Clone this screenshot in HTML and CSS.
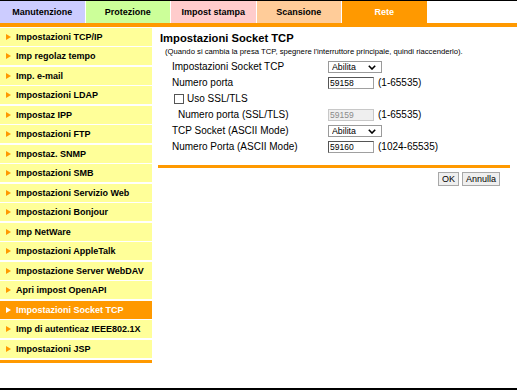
FILE: index.html
```html
<!DOCTYPE html>
<html lang="it">

<head>
    <meta charset="UTF-8">
    <title>Rete - Impostazioni Socket TCP</title>
    <link rel="stylesheet" href="styles.css">
</head>

<body>
    <div class="tabs">
        <div class="tab" id="tab-maint">Manutenzione</div>
        <div class="tab" id="tab-sec">Protezione</div>
        <div class="tab" id="tab-print">Impost stampa</div>
        <div class="tab" id="tab-scan">Scansione</div>
        <div class="tab active" id="tab-net">Rete</div>
    </div>
    <div class="tab-rule"></div>

    <div class="main">
        <div class="sidebar">
            <ul class="menu">
                <li class="menu-item">Impostazioni TCP/IP</li>
                <li class="menu-item">Imp regolaz tempo</li>
                <li class="menu-item">Imp. e-mail</li>
                <li class="menu-item">Impostazioni LDAP</li>
                <li class="menu-item">Impostaz IPP</li>
                <li class="menu-item">Impostazioni FTP</li>
                <li class="menu-item">Impostaz. SNMP</li>
                <li class="menu-item">Impostazioni SMB</li>
                <li class="menu-item">Impostazioni Servizio Web</li>
                <li class="menu-item">Impostazioni Bonjour</li>
                <li class="menu-item">Imp NetWare</li>
                <li class="menu-item">Impostazioni AppleTalk</li>
                <li class="menu-item">Impostazione Server WebDAV</li>
                <li class="menu-item">Apri impost OpenAPI</li>
                <li class="menu-item active">Impostazioni Socket TCP</li>
                <li class="menu-item">Imp di autenticaz IEEE802.1X</li>
                <li class="menu-item">Impostazioni JSP</li>
            </ul>
            <div class="menu-rule"></div>
        </div>

        <div class="content">
            <h1 class="title">Impostazioni Socket TCP</h1>
            <p class="note">(Quando si cambia la presa TCP, spegnere l'interruttore principale, quindi riaccenderlo).</p>

            <form class="settings">
                <div class="row">
                    <label class="label">Impostazioni Socket TCP</label>
                    <div class="select-wrap">
                        <select class="select">
                            <option>Abilita</option>
                            <option>Disabilita</option>
                        </select>
                        <svg class="chevron" width="8" height="5" viewBox="0 0 8 5">
                            <path d="M0.8 0.8 L4 4 L7.2 0.8" fill="none" stroke="#000" stroke-width="1.6"/>
                        </svg>
                    </div>
                </div>
                <div class="row">
                    <label class="label">Numero porta</label>
                    <input class="field" type="text" value="59158">
                    <span class="range">(1-65535)</span>
                </div>
                <div class="row">
                    <label class="check-label"><input class="check" type="checkbox">Uso SSL/TLS</label>
                </div>
                <div class="row">
                    <label class="label sub">Numero porta (SSL/TLS)</label>
                    <input class="field" type="text" value="59159" disabled>
                    <span class="range">(1-65535)</span>
                </div>
                <div class="row">
                    <label class="label">TCP Socket (ASCII Mode)</label>
                    <div class="select-wrap">
                        <select class="select">
                            <option>Abilita</option>
                            <option>Disabilita</option>
                        </select>
                        <svg class="chevron" width="8" height="5" viewBox="0 0 8 5">
                            <path d="M0.8 0.8 L4 4 L7.2 0.8" fill="none" stroke="#000" stroke-width="1.6"/>
                        </svg>
                    </div>
                </div>
                <div class="row">
                    <label class="label">Numero Porta (ASCII Mode)</label>
                    <input class="field" type="text" value="59160">
                    <span class="range">(1024-65535)</span>
                </div>

                <div class="content-rule"></div>

                <div class="buttons">
                    <button type="submit" class="btn">OK</button>
                    <button type="button" class="btn">Annulla</button>
                </div>
            </form>
        </div>
    </div>
    <div class="bottom-rule"></div>
</body>

</html>
```

FILE: styles.css
```css
body {
    margin: 0;
    padding: 0;
    background-color: #ffffff;
    color: #000000;
    font-family: "Liberation Sans", Arial, sans-serif;
}

/* top tabs */

.tabs {
    display: flex;
    flex-direction: row;
    gap: 1px;
    height: 22px;
    border-top: 1px solid #000000;
}

.tab {
    width: 84.5px;
    display: flex;
    align-items: center;
    justify-content: center;
    font-size: 9px;
    font-weight: bold;
    color: #000000;
}

#tab-maint {
    background-color: #ccccff;
}

#tab-sec {
    background-color: #ccff99;
}

#tab-print {
    background-color: #ffcccc;
}

#tab-scan {
    background-color: #ffcc99;
}

#tab-net {
    background-color: #ff9900;
    color: #ffffff;
}

.tab-rule {
    height: 4px;
    background-color: #ff9900;
}

/* main */

.main {
    display: flex;
    flex-direction: row;
    height: 361px;
}

.sidebar {
    width: 152px;
    padding-top: 0.5px;
}

.menu {
    list-style: none;
    margin: 0;
    padding: 0;
    display: flex;
    flex-direction: column;
    gap: 1.5px;
}

.menu-item {
    height: 18px;
    display: flex;
    align-items: center;
    padding-left: 6px;
    background-color: #ffff99;
    font-size: 9px;
    font-weight: bold;
}

.menu-item::before {
    content: "";
    width: 0;
    height: 0;
    margin-right: 5px;
    border-left: 5px solid #ff9900;
    border-top: 3.5px solid transparent;
    border-bottom: 3.5px solid transparent;
}

.menu-item.active {
    background-color: #ff9900;
    color: #ffffff;
}

.menu-item.active::before {
    border-left-color: #ffffff;
}

.menu-rule {
    height: 3px;
    margin-top: 2.5px;
    background-color: #ff9900;
}

.content {
    flex: 1;
    margin: 0 7px 0 6px;
    padding-top: 4px;
}

.title {
    margin: 0 0 2px 2px;
    font-size: 11.2px;
    line-height: 14px;
    font-weight: bold;
}

.note {
    margin: 0 0 1.5px 7px;
    font-size: 7.7px;
    line-height: 10px;
}

.settings {
    margin: 0;
}

.row {
    height: 16px;
    display: flex;
    align-items: center;
    padding-left: 14px;
    font-size: 10px;
}

.label {
    width: 156px;
}

.label.sub {
    width: 150px;
    padding-left: 6px;
}

.check-label {
    display: flex;
    align-items: center;
    padding-left: 2px;
}

.check {
    appearance: none;
    width: 10px;
    height: 10px;
    margin: 0 3px 0 0;
    border: 1px solid #555555;
    background-color: #ffffff;
}

.select-wrap {
    position: relative;
    width: 54px;
    height: 12px;
}

.select {
    appearance: none;
    width: 54px;
    height: 12px;
    margin: 0;
    padding: 0 0 0 3px;
    border: 1px solid #9a9a9a;
    border-radius: 0;
    background-color: #ffffff;
    font-family: "Liberation Sans", Arial, sans-serif;
    font-size: 8.8px;
    line-height: 10px;
    color: #000000;
}

.chevron {
    position: absolute;
    right: 6px;
    top: 4px;
    pointer-events: none;
}

.field {
    width: 46px;
    height: 12px;
    margin: 0;
    padding: 0 0 0 1px;
    box-sizing: border-box;
    border: 1px solid #a0a0a0;
    border-top-color: #555555;
    border-left-color: #555555;
    font-family: "Liberation Sans", Arial, sans-serif;
    font-size: 8.5px;
    color: #000000;
    background-color: #ffffff;
}

.field:disabled {
    background-color: #efefef;
    color: #8a8a8a;
    border-color: #c8c8c8;
}

.range {
    margin-left: 4px;
    font-size: 10px;
}

.content-rule {
    height: 3px;
    margin-top: 10.5px;
    background-color: #ff9900;
}

.buttons {
    display: flex;
    justify-content: flex-end;
    gap: 3px;
    margin-top: 4px;
    padding-right: 10px;
}

.btn {
    height: 14px;
    margin: 0;
    padding: 0 3px;
    border: 1px solid #a8a8a8;
    border-radius: 0;
    background-color: #efefef;
    font-family: "Liberation Sans", Arial, sans-serif;
    font-size: 9px;
    line-height: 12px;
    color: #000000;
}

.bottom-rule {
    height: 2px;
    background-color: #000000;
}
```
